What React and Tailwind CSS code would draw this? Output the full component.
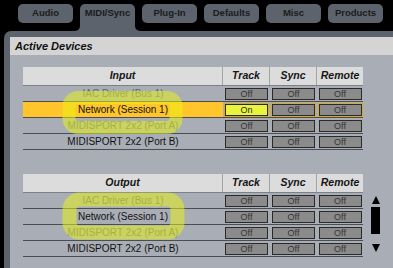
import React from 'react';

const tabs = ['Audio', 'MIDI/Sync', 'Plug-In', 'Defaults', 'Misc', 'Products'];

const inputRows = [
  { name: 'IAC Driver (Bus 1)', dim: true },
  { name: 'Network (Session 1)', selected: true, track: true },
  { name: 'MIDISPORT 2x2 (Port A)', dim: true },
  { name: 'MIDISPORT 2x2 (Port B)' },
];

const outputRows = [
  { name: 'IAC Driver (Bus 1)', dim: true },
  { name: 'Network (Session 1)' },
  { name: 'MIDISPORT 2x2 (Port A)', dim: true },
  { name: 'MIDISPORT 2x2 (Port B)' },
];

const Toggle = ({ on, selected }) => (
  <div className="flex justify-center pt-[2px]">
    <div
      className={
        'w-[43px] h-[12px] border border-[#2a2a2a] flex items-center justify-center text-[9px] leading-none ' +
        (on ? 'bg-[#e9f53c] text-[#2a2a2a]' : 'bg-[#8b8b8b] text-[#353535]') +
        (selected ? ' outline outline-1 outline-[#d8aa2c]' : '')
      }
    >
      {on ? 'On' : 'Off'}
    </div>
  </div>
);

const DeviceTable = ({ title, rows }) => (
  <div className="w-[340px]">
    <div className="grid grid-cols-[200px_47px_47px_46px] h-[19px] bg-[#dcdcdc] border-b border-[#7b8089] text-[10.5px] font-bold italic text-[#151515]">
      <div className="flex items-center justify-center border-r border-[#a4a4a4]">{title}</div>
      <div className="flex items-center justify-center border-r border-[#a4a4a4]">Track</div>
      <div className="flex items-center justify-center border-r border-[#a4a4a4]">Sync</div>
      <div className="flex items-center justify-center">Remote</div>
    </div>
    {rows.map((row) => (
      <div
        key={row.name}
        className="grid grid-cols-[200px_47px_47px_46px] h-[16px] border-b border-[#4a4d52]"
      >
        <div
          className={
            'flex items-center justify-center text-[10px] ' +
            (row.selected ? 'bg-[#ffc52b] text-[#111]' : '') +
            (row.dim ? 'text-[#5e6778]' : ' text-[#111]')
          }
        >
          {row.name}
        </div>
        <Toggle on={row.track} selected={row.selected} />
        <Toggle selected={row.selected} />
        <Toggle selected={row.selected} />
      </div>
    ))}
  </div>
);

export default function App() {
  return (
    <div className="relative w-[393px] h-[268px] overflow-hidden bg-black font-['Liberation_Sans',Arial,sans-serif]">
      {/* tab strip */}
      <div className="flex gap-[7px] pl-[18px] pt-[4px] h-[31px]">
        {tabs.map((t) =>
          t === 'MIDI/Sync' ? (
            <div key={t} className="relative w-[55px] h-[27px] bg-[#5c636d] rounded-t-[5px]">
              <div className="h-[19px] flex items-center justify-center text-[9.5px] font-bold text-[#1b1b1b]">
                {t}
              </div>
              <span className="absolute -left-[5px] bottom-0 w-[5px] h-[5px] bg-[#5c636d]" />
              <span className="absolute -left-[10px] bottom-0 w-[10px] h-[10px] rounded-full bg-black" />
              <span className="absolute -right-[5px] bottom-0 w-[5px] h-[5px] bg-[#5c636d]" />
              <span className="absolute -right-[10px] bottom-0 w-[10px] h-[10px] rounded-full bg-black" />
            </div>
          ) : (
            <div
              key={t}
              className="w-[55px] h-[19px] bg-[#5c636d] rounded-[5px] flex items-center justify-center text-[9.5px] font-bold text-[#1b1b1b]"
            >
              {t}
            </div>
          )
        )}
      </div>

      {/* panel */}
      <div className="ml-[4px] h-[237px] bg-[#5c636d] rounded-tl-[7px] pt-[6px] pl-[6px] flex flex-col">
        <div className="h-[18px] bg-[#d4d4d4] flex items-center pl-[5px] text-[11px] font-bold italic text-[#111]">
          Active Devices
        </div>
        <div className="flex-1 bg-[#a9aeb6] pl-[13px] pt-[12px]">
          <DeviceTable title="Input" rows={inputRows} />
          <div className="flex mt-[24px]">
            <DeviceTable title="Output" rows={outputRows} />
            <div className="ml-[8px] w-[9px] pt-[22px] flex flex-col items-center">
              <div className="w-0 h-0 border-l-[4.5px] border-r-[4.5px] border-b-[8px] border-l-transparent border-r-transparent border-b-black" />
              <div className="w-[9px] h-[27px] bg-black mt-[3px]" />
              <div className="w-0 h-0 border-l-[4.5px] border-r-[4.5px] border-t-[8px] border-l-transparent border-r-transparent border-t-black mt-[10px]" />
            </div>
          </div>
        </div>
      </div>

      {/* highlighter annotations */}
      <svg className="absolute inset-0 pointer-events-none" width="393" height="268">
        <rect x="69" y="97.5" width="107" height="30" rx="9" fill="none" stroke="rgba(232,244,20,0.52)" strokeWidth="13" />
        <rect x="69.5" y="199.5" width="108" height="33" rx="10" fill="none" stroke="rgba(232,244,20,0.52)" strokeWidth="14" />
      </svg>
    </div>
  );
}
